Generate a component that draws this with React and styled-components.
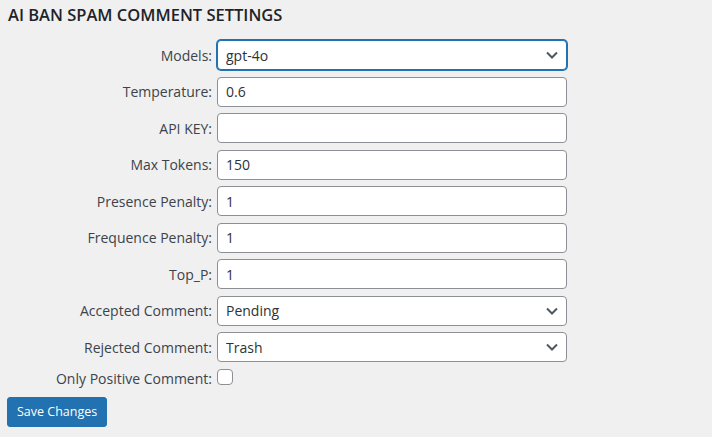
import React, { useState } from 'react';
import styled, { createGlobalStyle } from 'styled-components';

const GlobalStyle = createGlobalStyle`
  html, body {
    margin: 0;
    background: #f0f0f1;
  }
  body {
    font-family: "Open Sans", "Noto Sans", sans-serif;
    color: #3c434a;
  }
`;

const Page = styled.div`
  padding: 0 8px;
  width: 712px;
  height: 437px;
  box-sizing: border-box;
`;

const Title = styled.h2`
  margin: 4px 0 14px;
  font-size: 16.5px;
  line-height: 22px;
  font-weight: 600;
  color: #1d2327;
`;

const Form = styled.form`
  display: grid;
  grid-template-columns: 209px 350px;
  row-gap: 6.5px;
  align-items: center;
`;

const Label = styled.label`
  text-align: right;
  padding-right: 5px;
  font-size: 14px;
  color: #3c434a;
  white-space: nowrap;
`;

const Field = styled.div`
  position: relative;
  height: 30px;
`;

const TextInput = styled.input`
  box-sizing: border-box;
  width: 100%;
  height: 30px;
  padding: 0 8px;
  border: 1px solid #8c8f94;
  border-radius: 4px;
  background: #fff;
  font-family: inherit;
  font-size: 14px;
  color: #2c3338;
  outline: none;
`;

const Select = styled.select`
  box-sizing: border-box;
  width: 100%;
  height: 30px;
  padding: 0 24px 0 8px;
  border: 1px solid ${(p) => (p.$focused ? '#2271b1' : '#8c8f94')};
  box-shadow: ${(p) => (p.$focused ? '0 0 0 1px #2271b1' : 'none')};
  border-radius: 4px;
  background: #fff;
  font-family: inherit;
  font-size: 14px;
  color: #2c3338;
  appearance: none;
  outline: none;
`;

const Chevron = styled.svg`
  position: absolute;
  right: 8px;
  top: 9px;
  pointer-events: none;
`;

const CheckRow = styled.div`
  height: 16px;
  margin-top: -2px;
  display: flex;
  align-items: center;
`;

const Check = styled.input`
  appearance: none;
  margin: 0;
  width: 16px;
  height: 16px;
  border: 1px solid #8c8f94;
  border-radius: 4px;
  background: #fff;
  box-sizing: border-box;
`;

const SaveButton = styled.button`
  margin-top: 9px;
  margin-left: -1px;
  height: 30px;
  padding: 0 9px;
  background: #2271b1;
  border: 1px solid #2271b1;
  border-radius: 3px;
  color: #fff;
  font-family: inherit;
  font-size: 12.5px;
  cursor: pointer;
`;

const Arrow = () => (
  <Chevron width="14" height="12" viewBox="0 0 14 12">
    <path d="M2 3.5 L7 8.5 L12 3.5" fill="none" stroke="#50575e" strokeWidth="2" />
  </Chevron>
);

const fields = [
  { label: 'Temperature:', value: '0.6' },
  { label: 'API KEY:', value: '' },
  { label: 'Max Tokens:', value: '150' },
  { label: 'Presence Penalty:', value: '1' },
  { label: 'Frequence Penalty:', value: '1' },
  { label: 'Top_P:', value: '1' },
];

export default function App() {
  const [values, setValues] = useState(fields.map((f) => f.value));

  return (
    <Page>
      <GlobalStyle />
      <Title>AI BAN SPAM COMMENT SETTINGS</Title>
      <Form onSubmit={(e) => e.preventDefault()}>
        <Label>Models:</Label>
        <Field>
          <Select $focused defaultValue="gpt-4o">
            <option>gpt-4o</option>
            <option>gpt-4o-mini</option>
            <option>gpt-3.5-turbo</option>
          </Select>
          <Arrow />
        </Field>

        {fields.map((f, i) => (
          <React.Fragment key={f.label}>
            <Label>{f.label}</Label>
            <Field>
              <TextInput
                type="text"
                value={values[i]}
                onChange={(e) => {
                  const next = [...values];
                  next[i] = e.target.value;
                  setValues(next);
                }}
              />
            </Field>
          </React.Fragment>
        ))}

        <Label>Accepted Comment:</Label>
        <Field>
          <Select defaultValue="Pending">
            <option>Approved</option>
            <option>Pending</option>
            <option>Spam</option>
            <option>Trash</option>
          </Select>
          <Arrow />
        </Field>

        <Label>Rejected Comment:</Label>
        <Field>
          <Select defaultValue="Trash">
            <option>Pending</option>
            <option>Spam</option>
            <option>Trash</option>
          </Select>
          <Arrow />
        </Field>

        <Label>Only Positive Comment:</Label>
        <CheckRow>
          <Check type="checkbox" />
        </CheckRow>
      </Form>
      <SaveButton type="submit">Save Changes</SaveButton>
    </Page>
  );
}
